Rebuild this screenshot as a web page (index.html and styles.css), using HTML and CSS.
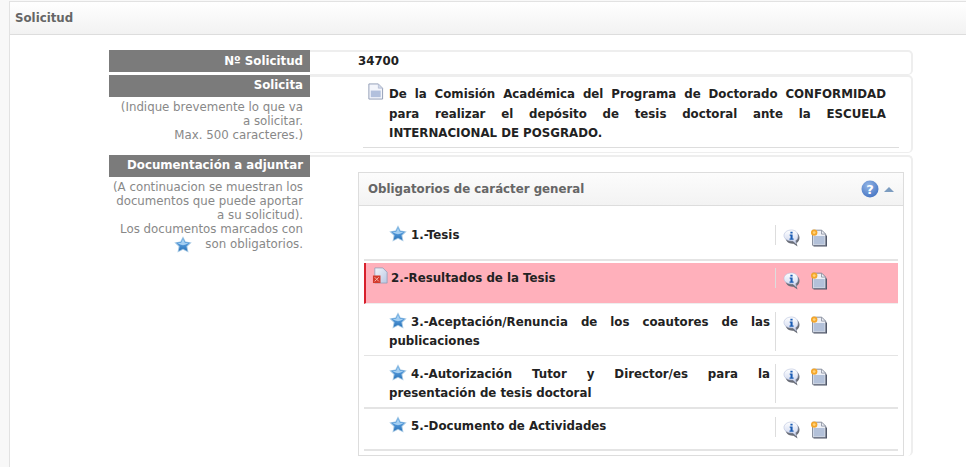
FILE: index.html
```html
<!DOCTYPE html>
<html lang="es">
<head>
<meta charset="utf-8">
<title>Solicitud</title>
<link rel="stylesheet" href="styles.css">
</head>
<body>
<svg class="defs" width="0" height="0" aria-hidden="true">
  <defs>
    <linearGradient id="starFill" x1="0" y1="0" x2="0" y2="1">
      <stop offset="0" stop-color="#6fb0e6"/><stop offset=".5" stop-color="#4f95d6"/><stop offset="1" stop-color="#2a73b8"/>
    </linearGradient>
    <linearGradient id="docFill" x1="0" y1="0" x2="1" y2="1">
      <stop offset="0" stop-color="#f2f5fb"/><stop offset="1" stop-color="#b9c6e2"/>
    </linearGradient>
    <linearGradient id="bubbleFill" x1="0" y1="0" x2="0" y2="1">
      <stop offset="0" stop-color="#ffffff"/><stop offset="1" stop-color="#ccd5ee"/>
    </linearGradient>
    <radialGradient id="helpFill" cx=".4" cy=".3" r=".8">
      <stop offset="0" stop-color="#94b6e6"/><stop offset="1" stop-color="#3f6fc0"/>
    </radialGradient>
    <symbol id="star" viewBox="0 0 18 18">
      <path d="M9 .3l2.700 5.200 6 .9-4.300 4.100 1.100 5.900L9 13.700l-5.500 2.700 1.100-5.900L.3 6.400l6-.9z" fill="#a5c8e4"/>
      <path d="M9 1.800l2.100 4.300 4.900.7-3.600 3.400.9 4.800L9 12.700 4.700 15l.9-4.800L2 6.800l4.900-.7z" fill="url(#starFill)"/>
      <path d="M3.500 7.300l3.700-.5L9 3l1.800 3.800 3.700.5-3.500 1.500q-2 .8-4 0z" fill="#a4cff2"/>
    </symbol>
    <symbol id="info" viewBox="0 0 18 18">
      <path d="M9.500 2.500c4 0 7 2.600 7 6.200 0 2.600-1.300 4.300-3 5.300l1 3.600L10.500 14.800H9.500c-4 0-7-2.600-7-6.200s3-6.100 7-6.100z" fill="#6a6e78"/>
      <path d="M8.500 1C12.400 1 15 3.400 15 6.900c0 2.300-1 3.900-2.500 4.800l.7 3-3.300-2.800H8.500C4.500 11.900 1 9.900 1 6.500S4.500 1 8.500 1z" fill="url(#bubbleFill)" stroke="#b5bfdc" stroke-width=".6"/>
      <path d="M7.400 2.800h2.200v1.800H7.400zM6.700 5.600h2.900v4h1v1.100H6.500V9.600h1V6.700h-.8z" fill="#1a5cb4"/>
    </symbol>
    <symbol id="newdoc" viewBox="0 0 18 18">
      <path d="M3.500 2.500h9l4.500 4.500v10.500H3.500z" fill="#4c5364"/>
      <path d="M2.500 1.200h9.300l3.900 3.900v11.200H2.500z" fill="#eef0f6" stroke="#6f7688" stroke-width=".8"/>
      <path d="M3.500 7h11.200v8.400H3.500z" fill="#b3c1d9"/>
      <path d="M11.500 1.500v3.600h3.800" fill="none" stroke="#7b8294" stroke-width=".7"/>
      <circle cx="4.200" cy="3.600" r="3.200" fill="#f4a62a"/>
      <circle cx="4.200" cy="3.600" r="1.400" fill="#ffd27a"/>
    </symbol>
    <symbol id="doc" viewBox="0 0 18 18">
      <path d="M2 1h10l4.500 4.500V17H2z" fill="#f3f5fb" stroke="#8f9bb5" stroke-width="1"/>
      <path d="M4 8h10.500v7H4z" fill="#b2c0dd"/>
      <path d="M12 1.500v4h4" fill="#cfd8ea" stroke="#a4aec6" stroke-width=".6"/>
    </symbol>
    <symbol id="docerror" viewBox="0 0 18 18">
      <path d="M3 1h8.500L16 5.500V17H3z" fill="url(#docFill)" stroke="#8f9bb5" stroke-width=".8"/>
      <rect x="1" y="9" width="8" height="8" fill="#d33a2c"/>
      <path d="M2.800 10.800l4.400 4.400m0-4.400l-4.400 4.400" stroke="#f7b9b0" stroke-width="1"/>
    </symbol>
    <symbol id="help" viewBox="0 0 18 18">
      <circle cx="9" cy="9" r="8.500" fill="url(#helpFill)"/>
      <text x="9" y="14" text-anchor="middle" class="help-mark">?</text>
    </symbol>
  </defs>
</svg>

<main class="panel">
  <header class="panel-head">Solicitud</header>
  <div class="form">
    <section class="field field-number">
      <div class="label-col"><div class="label">Nº Solicitud</div></div>
      <div class="value value-number">34700</div>
    </section>
    <section class="field field-request">
      <div class="label-col">
        <div class="label">Solicita</div>
        <p class="hint">(Indique brevemente lo que va<br>a solicitar.<br>Max. 500 caracteres.)</p>
      </div>
      <div class="value value-request">
        <p class="request-text"><svg class="ic-doc"><use href="#doc"/></svg>De la Comisión Académica del Programa de Doctorado CONFORMIDAD para realizar el depósito de tesis doctoral ante la ESCUELA INTERNACIONAL DE POSGRADO.</p>
      </div>
    </section>
    <section class="field field-docs">
      <div class="label-col">
        <div class="label">Documentación a adjuntar</div>
        <p class="hint">(A continuacion se muestran los<br>documentos que puede aportar<br>a su solicitud).<br>Los documentos marcados con<br><svg class="ic-star ic-star-hint"><use href="#star"/></svg>son obligatorios.</p>
      </div>
      <div class="value value-docs">
        <div class="card">
          <div class="card-head">
            <span>Obligatorios de carácter general</span>
            <span class="card-tools"><svg class="ic-help"><use href="#help"/></svg><i class="caret"></i></span>
          </div>
          <ul class="doc-list">
            <li class="doc doc-1">
              <div class="doc-name"><svg class="ic-star"><use href="#star"/></svg>1.-Tesis</div>
              <div class="doc-actions"><svg class="ic-act"><use href="#info"/></svg><svg class="ic-act"><use href="#newdoc"/></svg></div>
            </li>
            <li class="doc doc-2 doc-missing">
              <div class="doc-name"><svg class="ic-err"><use href="#docerror"/></svg>2.-Resultados de la Tesis</div>
              <div class="doc-actions"><svg class="ic-act"><use href="#info"/></svg><svg class="ic-act"><use href="#newdoc"/></svg></div>
            </li>
            <li class="doc doc-3">
              <div class="doc-name"><svg class="ic-star"><use href="#star"/></svg>3.-Aceptación/Renuncia de los coautores de las publicaciones</div>
              <div class="doc-actions"><svg class="ic-act"><use href="#info"/></svg><svg class="ic-act"><use href="#newdoc"/></svg></div>
            </li>
            <li class="doc doc-4">
              <div class="doc-name"><svg class="ic-star"><use href="#star"/></svg>4.-Autorización Tutor y Director/es para la presentación de tesis doctoral</div>
              <div class="doc-actions"><svg class="ic-act"><use href="#info"/></svg><svg class="ic-act"><use href="#newdoc"/></svg></div>
            </li>
            <li class="doc doc-5">
              <div class="doc-name"><svg class="ic-star"><use href="#star"/></svg>5.-Documento de Actividades</div>
              <div class="doc-actions"><svg class="ic-act"><use href="#info"/></svg><svg class="ic-act"><use href="#newdoc"/></svg></div>
            </li>
          </ul>
        </div>
      </div>
    </section>
  </div>
</main>
</body>
</html>
```
FILE: styles.css
```css
* { box-sizing: border-box; }
html, body { height: 100%; }
body {
  margin: 0;
  overflow: hidden;
  background: #f8f8f8;
  font-family: "DejaVu Sans", Verdana, sans-serif;
  font-size: 11.800px;
  color: #333;
}
.defs { position: absolute; }
.help-mark { font: bold 13px "DejaVu Sans", sans-serif; fill: #fff; }
.panel {
  margin: 1px 0 0 9px;
  height: 466px;
  background: #fff;
  border-top: 1px solid #e2e2e2;
  border-left: 1px solid #e2e2e2;
}
.panel-head {
  height: 33px;
  padding: 9px 0 0 5px;
  background: linear-gradient(#fff, #f2f2f2);
  border-bottom: 1px solid #ddd;
  font-weight: bold;
  color: #666;
}
.form {
  display: flex;
  flex-direction: column;
  margin-left: 99px;
  width: 804px;
  padding-top: 15px;
}
.field { display: grid; grid-template-columns: 201px 603px; }
.field-number { height: 25px; }
.field-request { height: 78px; }
.field-docs { margin-top: 2px; }
.label {
  height: 22px;
  padding: 3px 7px 0 0;
  background: #7b7b7b;
  color: #fff;
  font-weight: bold;
  text-align: right;
  white-space: nowrap;
}
.field-number .label { padding-top: 4px; }
.hint {
  margin: 3px 7px 0 0;
  color: #888;
  font-size: 11.800px;
  line-height: 14px;
  text-align: right;
  white-space: nowrap;
}
.value {
  background: #fff;
  border-top: 2px solid #eee;
  border-right: 2px solid #eee;
  border-radius: 0 5px 5px 0;
}
.value-number {
  padding: 2px 0 0 48px;
  font-weight: bold;
  color: #222;
  border-bottom: 1px solid #eee;
}
.value-request {
  padding: 8px 12px 0 53px;
  border-bottom: 1px solid #eee;
}
.request-text {
  margin: 0;
  padding: 0 13px 3px 26px;
  font-weight: bold;
  line-height: 19.500px;
  text-align: justify;
  color: #222;
  border-bottom: 1px solid #ddd;
  position: relative;
}
.value-docs { padding: 15px 7px 0 48px; }
.ic-doc {
  position: absolute;
  left: 4px;
  top: -2px;
  width: 17px;
  height: 17px;
}
.card {
  height: 284px;
  border: 1px solid #ddd;
  background: #fff;
}
.card-head {
  display: flex;
  justify-content: space-between;
  align-items: center;
  height: 33px;
  padding: 0 9px 0 9px;
  background: linear-gradient(#fcfcfc, #f3f3f3);
  border-bottom: 1px solid #ddd;
  font-weight: bold;
  color: #666;
}
.card-tools { display: flex; align-items: center; gap: 5px; }
.ic-help { width: 18px; height: 18px; }
.caret {
  width: 0;
  height: 0;
  border-left: 5px solid transparent;
  border-right: 5px solid transparent;
  border-bottom: 5px solid #7c9cc0;
}
.doc-list { list-style: none; margin: 0; padding: 0 5px; }
.doc {
  display: flex;
  font-weight: bold;
  line-height: 19px;
  border-bottom: 2px solid #e4e4e4;
}
.doc-1 { height: 55px; padding-top: 19px; }
.doc-2 { height: 41px; padding-top: 4px; margin-top: 2px; }
.doc-3 { height: 52px; padding-top: 8px; border-bottom-width: 1px; }
.doc-4 { height: 53px; padding-top: 8px; }
.doc-5 { height: 42px; padding-top: 7px; }
.doc-missing {
  background: #ffb0bb;
  border-left: 2px solid #d8202c;
  border-bottom-width: 1px;
  border-bottom-color: #eee;
}
.doc-name {
  flex: 0 0 411px;
  padding: 0 5px 0 25px;
  text-align: justify;
  color: #222;
}
.doc-missing .doc-name { flex-basis: 409px; padding-left: 6px; }
.doc-actions {
  display: flex;
  flex: 1;
  align-items: flex-start;
  gap: 9px;
  height: 20px;
  margin-top: 0;
  padding: 4px 0 0 7px;
  border-left: 1px solid #ddd;
}
.doc-2 .doc-actions, .doc-5 .doc-actions { margin-top: 1px; }
.doc-3 .doc-actions, .doc-4 .doc-actions { height: 39px; }
.ic-star { width: 18px; height: 18px; margin-right: 4px; vertical-align: -4px; }
.ic-star-hint { margin-right: 13px; vertical-align: -6px; }
.ic-err { width: 17px; height: 17px; margin-right: 2px; vertical-align: -2px; }
.ic-act { width: 18px; height: 18px; flex: none; }
```
